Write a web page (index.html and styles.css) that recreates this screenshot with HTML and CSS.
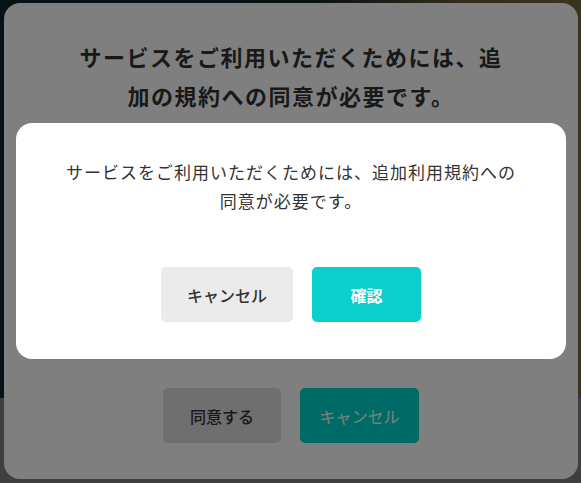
FILE: index.html
```html
<!DOCTYPE html>
<html lang="ja">
<head>
  <meta charset="UTF-8" />
  <title>利用規約への同意</title>
  <meta name="viewport" content="width=device-width, initial-scale=1" />
  <link rel="stylesheet" href="styles.css">
</head>
<body>

  <!-- 背景ページ -->
  <div class="page">
    <div class="hero"></div>
    <div class="page-body">
      <p>ご利用にあたっての注意事項をご確認ください。</p>
    </div>
  </div>

  <!-- 規約同意モーダル -->
  <div class="overlay overlay-terms">
    <div class="modal terms">
      <h2 class="terms-title">サービスをご利用いただくためには、追加の規約への同意が必要です。</h2>
      <div class="actions">
        <button class="btn btn-gray btn-agree">同意する</button>
        <button class="btn btn-teal btn-close">キャンセル</button>
      </div>
    </div>
  </div>

  <!-- 確認ダイアログ -->
  <div class="overlay overlay-confirm">
    <div class="modal confirm">
      <p class="confirm-text">サービスをご利用いただくためには、追加利用規約への同意が必要です。</p>
      <div class="actions">
        <button class="btn btn-light btn-cancel">キャンセル</button>
        <button class="btn btn-primary btn-ok">確認</button>
      </div>
    </div>
  </div>

</body>
</html>
```

FILE: styles.css
```css
:root {
  --texte: #333333;
  --turquoise: #0acfcb;
  --turquoise-fonce: #00d6cc;
  --gris: #dedede;
  --gris-clair: #ebebeb;
  --voile: rgba(0, 0, 0, 0.5);
}

* {
  box-sizing: border-box;
}

html, body {
  height: 100%;
}

body {
  margin: 0;
  font-family: "Noto Sans CJK JP", "Noto Sans", sans-serif;
  color: var(--texte);
  background: #ffffff;
  overflow: hidden;
}

.page {
  height: 100%;
}

.hero {
  height: 398px;
  background: linear-gradient(90deg, #20465a 0%, #2a4a58 55%, #c9ae6a 78%, #ecd080 100%);
}

.page-body {
  padding: 30px 40px 0;
}

.page-body p {
  margin: 0;
  font-size: 14px;
  color: #444;
}

/* Voiles */
.overlay {
  position: fixed;
  inset: 0;
  background: var(--voile);
  display: flex;
}

.overlay-terms {
  padding: 3px 3px 4px 4px;
}

.overlay-confirm {
  align-items: center;
  justify-content: center;
  padding-left: 1px;
  padding-bottom: 1px;
}

.modal {
  background: #ffffff;
  border-radius: 16px;
}

/* Modale du dessous */
.terms {
  flex: 1;
  display: flex;
  flex-direction: column;
  padding: 34px 20px 36px;
}

.terms-title {
  max-width: 440px;
  margin: 0 auto;
  text-align: center;
  font-size: 22px;
  font-weight: 700;
  letter-spacing: 1.5px;
  line-height: 39px;
  color: var(--texte);
}

.terms .actions {
  margin-top: auto;
}

/* Boutons */
.actions {
  display: flex;
  justify-content: center;
  gap: 19px;
}

.btn {
  height: 55px;
  border: none;
  border-radius: 5px;
  font-family: inherit;
  font-size: 16px;
  font-weight: 500;
  cursor: pointer;
}

.btn-gray {
  width: 118px;
  background: var(--gris);
  color: var(--texte);
}

.btn-teal {
  width: 119px;
  background: var(--turquoise-fonce);
  color: #ffffff;
  font-weight: 400;
}

.btn-light {
  width: 132px;
  background: var(--gris-clair);
  color: var(--texte);
}

.btn-primary {
  width: 109px;
  background: var(--turquoise);
  color: #ffffff;
  font-weight: 700;
}

/* Dialogue de confirmation */
.confirm {
  width: 550px;
  padding: 34px 20px 37px;
}

.confirm-text {
  max-width: 456px;
  margin: 0 auto 52px;
  text-align: center;
  font-size: 17px;
  letter-spacing: 1px;
  line-height: 29px;
}
```
